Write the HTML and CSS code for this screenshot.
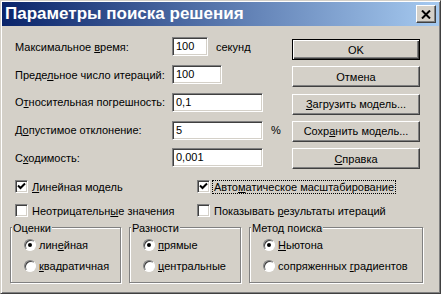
FILE: index.html
```html
<!DOCTYPE html>
<html lang="ru">
<head>
<meta charset="utf-8">
<title>Параметры поиска решения</title>
<link rel="stylesheet" href="styles.css">
</head>
<body>
<div class="window">
  <div class="titlebar">
    <span class="title">Параметры поиска решения</span>
    <span class="close"><svg width="10" height="9" viewBox="0 0 10 9"><path d="M1 0.5 L9 8.5 M9 0.5 L1 8.5" stroke="#000" stroke-width="2" fill="none"/></svg></span>
  </div>
  <div class="content">
    <div class="top">
      <div class="fields">
        <span class="label">Максимальное <u>в</u>ремя:</span>
        <span class="control"><span class="input w36">100</span><span class="suffix">секунд</span></span>
        <span class="label">Преде<u>л</u>ьное число итераций:</span>
        <span class="control"><span class="input w50">100</span></span>
        <span class="label">О<u>т</u>носительная погрешность:</span>
        <span class="control"><span class="input w91">0,1</span></span>
        <span class="label">Д<u>о</u>пустимое отклонение:</span>
        <span class="control"><span class="input w91">5</span><span class="suffix">%</span></span>
        <span class="label">С<u>х</u>одимость:</span>
        <span class="control"><span class="input w91">0,001</span></span>
      </div>
      <div class="buttons">
        <span class="btn default">OK</span>
        <span class="btn">Отмена</span>
        <span class="btn"><u>З</u>агрузить модель...</span>
        <span class="btn">Сохр<u>а</u>нить модель...</span>
        <span class="btn"><u>С</u>правка</span>
      </div>
    </div>
    <div class="checks">
      <label class="check"><span class="box checked"><svg width="9" height="9" viewBox="0 0 9 9"><path d="M1 3.5 L3.5 6 L8 1.5" stroke="#000" stroke-width="2" fill="none"/></svg></span><span><u>Л</u>инейная модель</span></label>
      <label class="check"><span class="box checked"><svg width="9" height="9" viewBox="0 0 9 9"><path d="M1 3.5 L3.5 6 L8 1.5" stroke="#000" stroke-width="2" fill="none"/></svg></span><span class="focus">Авто<u>м</u>атическое масштабирование</span></label>
      <label class="check"><span class="box"></span><span>Неотрицательн<u>ы</u>е значения</span></label>
      <label class="check"><span class="box"></span><span>Показывать <u>р</u>езультаты итераций</span></label>
    </div>
    <div class="groups">
      <fieldset class="group g1">
        <legend>Оценки</legend>
        <div class="radio"><span class="dot on"></span><span>лин<u>е</u>йная</span></div>
        <div class="radio"><span class="dot"></span><span><u>к</u>вадратичная</span></div>
      </fieldset>
      <fieldset class="group g2">
        <legend>Разности</legend>
        <div class="radio"><span class="dot on"></span><span><u>п</u>рямые</span></div>
        <div class="radio"><span class="dot"></span><span><u>ц</u>ентральные</span></div>
      </fieldset>
      <fieldset class="group g3">
        <legend>Метод поиска</legend>
        <div class="radio"><span class="dot on"></span><span><u>Н</u>ьютона</span></div>
        <div class="radio"><span class="dot"></span><span>сопряженных <u>г</u>радиентов</span></div>
      </fieldset>
    </div>
  </div>
</div>
</body>
</html>
```

FILE: styles.css
```css
html, body {
  margin: 0;
  padding: 0;
  background: #d4d0c8;
}
body {
  font-family: "Liberation Sans", Arial, sans-serif;
  font-size: 11px;
  color: #000;
  white-space: nowrap;
}
.window {
  box-sizing: border-box;
  width: 441px;
  height: 294px;
  padding: 1px;
  border: 1px solid;
  border-color: #d4d0c8 #404040 #404040 #d4d0c8;
  box-shadow: inset 1px 1px 0 #fff, inset -1px -1px 0 #808080;
  background: #d4d0c8;
}
.titlebar {
  height: 24px;
  display: flex;
  align-items: center;
  padding-left: 3px;
  background: linear-gradient(to right, #0a246a, #a6caf0);
}
.title {
  color: #fff;
  font-weight: bold;
  font-size: 17px;
  flex: 1;
}
.close {
  box-sizing: border-box;
  width: 20px;
  height: 18px;
  margin-right: 3px;
  display: flex;
  align-items: center;
  justify-content: center;
  background: #d4d0c8;
  border: 1px solid;
  border-color: #fff #404040 #404040 #fff;
  box-shadow: inset -1px -1px 0 #808080;
}
.content {
  padding: 7px 0 0 13px;
}
.top {
  display: flex;
}
.fields {
  display: grid;
  grid-template-columns: 157px 110px;
  grid-auto-rows: 27.75px;
  align-items: center;
  justify-items: start;
}
.control {
  display: flex;
  align-items: center;
}
.input {
  box-sizing: border-box;
  height: 19px;
  line-height: 15px;
  padding: 1px 3px;
  background: #fff;
  border: 1px solid;
  border-color: #808080 #fff #fff #808080;
  box-shadow: inset 1px 1px 0 #404040, inset -1px -1px 0 #d4d0c8;
}
.w36 { width: 36px; }
.w50 { width: 50px; }
.w91 { width: 91px; }
.suffix {
  margin-left: 8px;
}
.buttons {
  margin-left: auto;
  margin-right: 19px;
  padding-top: 6px;
  display: flex;
  flex-direction: column;
  gap: 6.25px;
}
.btn {
  box-sizing: border-box;
  width: 128px;
  height: 21px;
  display: flex;
  align-items: center;
  justify-content: center;
  border: 1px solid;
  border-color: #fff #404040 #404040 #fff;
  box-shadow: inset -1px -1px 0 #808080;
}
.btn.default {
  border-color: #000;
  box-shadow: inset 1px 1px 0 #fff, inset -1px -1px 0 #404040, inset -2px -2px 0 #808080;
}
.checks {
  margin-top: 3px;
  display: grid;
  grid-template-columns: 182px auto;
  grid-auto-rows: 24px;
  align-items: center;
}
.check {
  display: flex;
  align-items: center;
  gap: 4px;
}
.box {
  box-sizing: border-box;
  width: 13px;
  height: 13px;
  display: flex;
  align-items: center;
  justify-content: center;
  background: #fff;
  border: 1px solid;
  border-color: #808080 #fff #fff #808080;
  box-shadow: inset 1px 1px 0 #404040, inset -1px -1px 0 #d4d0c8;
}
.focus {
  outline: 1px dotted #000;
  padding: 0 1px;
  margin-left: -1px;
}
.groups {
  display: flex;
  gap: 8px;
  margin-left: -5px;
  margin-top: -1px;
}
.group {
  box-sizing: border-box;
  margin: 0;
  padding: 1px 0 5px 13px;
  border: 1px solid #808080;
  box-shadow: inset 1px 1px 0 #fff, 1px 1px 0 #fff;
}
.g1 { width: 111px; }
.g2 { width: 112px; }
.g3 { width: 174px; }
.group legend {
  padding: 0 1px;
  margin-left: -12px;
  line-height: 12px;
  background: #d4d0c8;
}
.radio {
  height: 21px;
  display: flex;
  align-items: center;
  gap: 3px;
}
.dot {
  box-sizing: border-box;
  width: 12px;
  height: 12px;
  border-radius: 50%;
  background: #fff;
  border: 1px solid;
  border-color: #808080 #fff #fff #808080;
  box-shadow: inset 1px 1px 0 #404040;
  display: flex;
  align-items: center;
  justify-content: center;
}
.dot.on::after {
  content: "";
  width: 4px;
  height: 4px;
  border-radius: 50%;
  background: #000;
}
```
